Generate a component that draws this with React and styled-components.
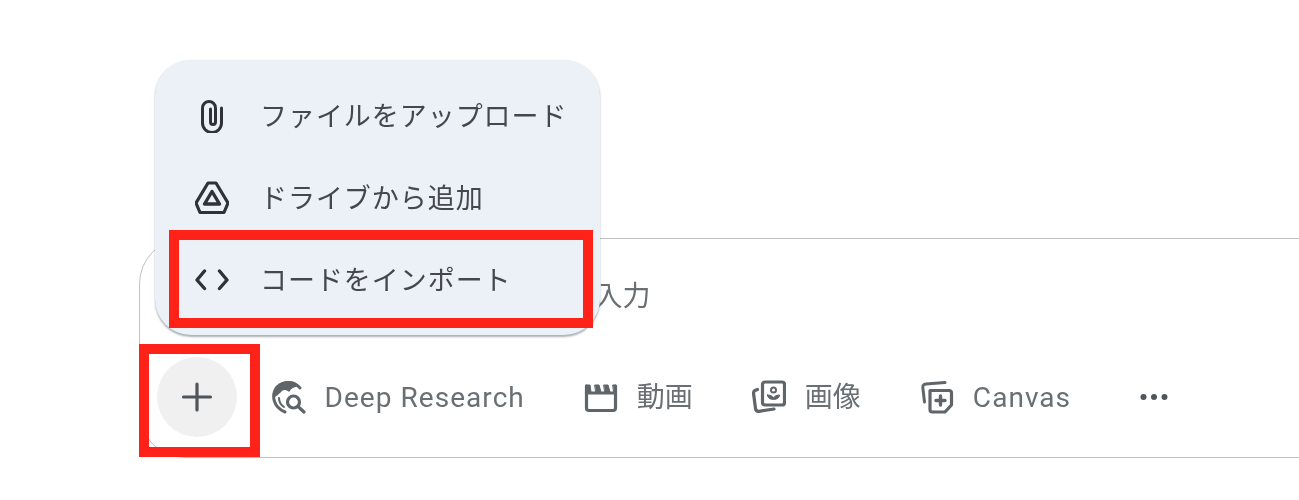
import React from "react";
import styled, { createGlobalStyle } from "styled-components";

const Global = createGlobalStyle`
  html, body { margin: 0; background: #fff; }
  body { font-family: "Noto Sans CJK JP", "Noto Sans", sans-serif; }
`;

const Page = styled.div`
  width: 1299px;
  height: 500px;
  overflow: hidden;
  box-sizing: border-box;
  padding: 238px 0 0 139px;
  background: #fff;
  filter: blur(0.6px);
`;

const PromptBox = styled.div`
  position: relative;
  width: 1300px;
  height: 220px;
  box-sizing: border-box;
  border: 1.5px solid #bfc1c2;
  border-radius: 46px;
  padding: 25px 0 0 16.5px;
  display: flex;
  flex-direction: column;
`;

const Placeholder = styled.div`
  height: 60px;
  padding-left: 438px;
  font-size: 28px;
  line-height: 60px;
  color: #6a6f73;
  white-space: nowrap;
`;

const Toolbar = styled.div`
  margin-top: 33px;
  display: flex;
  align-items: center;
  gap: 59px;
`;

const PlusButton = styled.div`
  position: relative;
  width: 80px;
  height: 80px;
  margin-right: -24px;
  border-radius: 50%;
  background: #f0f0f0;
  display: flex;
  align-items: center;
  justify-content: center;
  &::after {
    content: "";
    position: absolute;
    inset: -13px -23px -20px -18px;
    border: 10px solid #ff2219;
  }
`;

const ToolItem = styled.div`
  display: flex;
  align-items: center;
  gap: 19px;
  font-family: "Roboto", "Noto Sans CJK JP", sans-serif;
  font-size: 28px;
  line-height: 40px;
  color: #6a6f73;
  white-space: nowrap;
`;

const ToolLabel = styled.span`
  padding-top: 2px;
  letter-spacing: ${(p) => (p.$latin ? "1.05px" : "0")};
`;

const IconBox = styled.span`
  flex: none;
  width: 34px;
  height: 34px;
  display: flex;
  align-items: center;
  justify-content: center;
  color: ${(p) => p.$color || "#5f6569"};
`;

const MoreButton = styled(IconBox)`
  width: 28px;
  margin-left: 10px;
  color: #50555a;
`;

const Menu = styled.div`
  position: absolute;
  left: 15px;
  top: -179px;
  width: 445px;
  box-sizing: border-box;
  padding: 15px 0 14px;
  border-radius: 36px;
  background: #ecf0f7;
  box-shadow: 0 1.5px 2px rgba(70, 80, 90, 0.45);
`;

const MenuRow = styled.div`
  position: relative;
  height: 82px;
  box-sizing: border-box;
  padding-left: 40px;
  display: flex;
  align-items: center;
  gap: 31px;
  font-size: 27px;
  letter-spacing: 0.95px;
  color: #44484d;
  white-space: nowrap;
  ${(p) =>
    p.$marked &&
    `&::after {
      content: "";
      position: absolute;
      inset: -9px 7px -7px 14px;
      border: 10px solid #ff2219;
    }`}
`;

const MenuLabel = styled.span`
  margin-top: -4px;
`;

const Svg = ({ w = 34, h = 34, children }) => (
  <svg width={w} height={h} viewBox={`0 0 ${w} ${h}`} fill="none" stroke="currentColor" strokeLinecap="round" strokeLinejoin="round">
    {children}
  </svg>
);

const Clip = () => (
  <Svg>
    <path d="M26.500 9V24a9.500 9.500 0 0 1-19 0V9a6.500 6.500 0 0 1 13 0V23a2.500 2.500 0 0 1-5 0V10" strokeWidth="3" />
  </Svg>
);
const Drive = () => (
  <Svg>
    <path d="M13 2h8l12 20-4 9.500H5L1 22Z" strokeWidth="3.200" />
    <path d="M17 10.500l7.500 12.500h-15Z" strokeWidth="3.400" />
  </Svg>
);
const Code = () => (
  <Svg>
    <path d="M9.500 8L2 17l7.500 8.500M24.500 8L32 17l-7.500 8.500" strokeWidth="3.400" />
  </Svg>
);
const Plus = () => (
  <Svg>
    <path d="M17 4V30M3.500 17H30.500" strokeWidth="3.200" />
  </Svg>
);
const Research = () => (
  <Svg>
    <path d="M28 8A16 16 0 0 0 5 7C-1 15 1 27 13 32" strokeWidth="3" />
    <path d="M3 16C3 8 10 2 18 2c3 0 6 1 8 4-4 0-7 1-9 5-3-3-7-2-9 1-1 1-3 3-5 4Z" fill="currentColor" strokeWidth="1.500" />
    <path d="M7 18c0 4 2 7 5 9" strokeWidth="2" />
    <circle cx="21.500" cy="22" r="6" strokeWidth="3.200" />
    <path d="M26 26.500L32 32" strokeWidth="3.200" />
  </Svg>
);
const Movie = () => (
  <Svg>
    <path d="M2.500 6V28a2.500 2.500 0 0 0 2.500 2.500H29a2.500 2.500 0 0 0 2.500-2.500V6" strokeWidth="3.200" />
    <path d="M2 5h4l1 7H2ZM11 5h4l2 7h-5ZM20 5h4l2 7h-5ZM29 5h3v7h-2Z" fill="currentColor" strokeWidth="1" />
    <path d="M2.500 13H31.500" strokeWidth="3.200" />
  </Svg>
);
const Photos = () => (
  <Svg>
    <rect x="10.500" y="2" width="22" height="23" rx="2.500" strokeWidth="3.200" />
    <circle cx="21.500" cy="10" r="2.500" strokeWidth="2" />
    <path d="M15.500 15c0 3 3 4.500 6 4.500s6-1.500 6-4.500c-3 0-5 1-6 3-1-2-3-3-6-3Z" fill="currentColor" strokeWidth="1" />
    <path d="M5.500 9.500L3 10.500c-1 .5-1.500 1-1.500 2.500L3.500 28.500c.3 2 1.500 3 3.500 2.800l15-2.300" strokeWidth="3.200" />
  </Svg>
);
const CanvasIcon = () => (
  <Svg>
    <path d="M25 2.500L6 4C4 4 2.500 5.500 2.800 7.500L4.500 22" strokeWidth="3" />
    <path d="M10 10.500H29a2.500 2.500 0 0 1 2.500 2.500V25L25 32H12.500A2.500 2.500 0 0 1 10 29.500Z" strokeWidth="3.200" />
    <path d="M20.500 16V25M16 20.500H25" strokeWidth="3.400" />
  </Svg>
);
const Dots = () => (
  <Svg w={28} h={34}>
    <g fill="currentColor" stroke="none">
      <circle cx="3.500" cy="17" r="3" />
      <circle cx="14" cy="17" r="3" />
      <circle cx="24.500" cy="17" r="3" />
    </g>
  </Svg>
);

const menuItems = [
  { icon: <Clip />, label: "ファイルをアップロード" },
  { icon: <Drive />, label: "ドライブから追加" },
  { icon: <Code />, label: "コードをインポート", marked: true },
];

const tools = [
  { icon: <Research />, label: "Deep Research", latin: true },
  { icon: <Movie />, label: "動画" },
  { icon: <Photos />, label: "画像" },
  { icon: <CanvasIcon />, label: "Canvas", latin: true },
];

export default function App() {
  return (
    <>
      <Global />
      <Page>
        <PromptBox>
          <Placeholder>入力</Placeholder>
          <Toolbar>
            <PlusButton>
              <IconBox $color="#50555a"><Plus /></IconBox>
            </PlusButton>
            {tools.map((t) => (
              <ToolItem key={t.label}>
                <IconBox>{t.icon}</IconBox>
                <ToolLabel $latin={t.latin}>{t.label}</ToolLabel>
              </ToolItem>
            ))}
            <MoreButton><Dots /></MoreButton>
          </Toolbar>
          <Menu>
            {menuItems.map((m) => (
              <MenuRow key={m.label} $marked={m.marked}>
                <IconBox $color="#2f3236">{m.icon}</IconBox>
                <MenuLabel>{m.label}</MenuLabel>
              </MenuRow>
            ))}
          </Menu>
        </PromptBox>
      </Page>
    </>
  );
}
